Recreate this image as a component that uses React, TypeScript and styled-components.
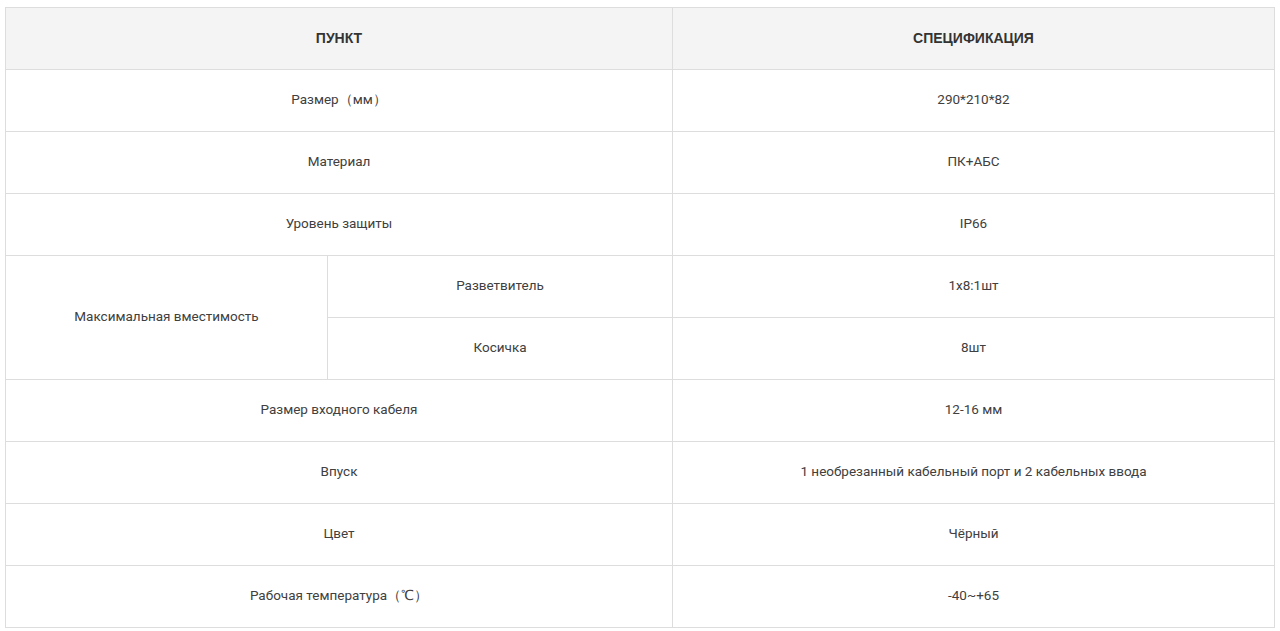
import styled, { createGlobalStyle } from 'styled-components'

const GlobalStyle = createGlobalStyle`
  body {
    margin: 0;
    padding: 7px 6px 0 5px;
    background: #fff;
    font-family: Roboto, 'Liberation Sans', Arial, sans-serif;
  }
`

const SpecTable = styled.table`
  width: 1269px;
  border-collapse: collapse;
  table-layout: fixed;
  color: #404040;
  font-size: 13.5px;
`

const HeadCell = styled.th`
  height: 59px;
  padding: 0 10px 2px;
  background-color: #f4f4f4;
  border: 1px solid #dddddd;
  font-family: 'Liberation Sans', Arial, sans-serif;
  font-size: 14px;
  font-weight: bold;
  text-transform: uppercase;
  color: #333;
  text-align: center;
`

const Cell = styled.td`
  height: 58px;
  padding: 0 10px 3px;
  border: 1px solid #dddddd;
  text-align: center;
  vertical-align: middle;
  line-height: 20px;
`

type Row = { item: string; sub?: string; value: string; span?: number; skip?: boolean }

const rows: Row[] = [
  { item: 'Размер（мм）', value: '290*210*82' },
  { item: 'Материал', value: 'ПК+АБС' },
  { item: 'Уровень защиты', value: 'IP66' },
  { item: 'Максимальная вместимость', sub: 'Разветвитель', value: '1x8:1шт', span: 2 },
  { item: '', sub: 'Косичка', value: '8шт', skip: true },
  { item: 'Размер входного кабеля', value: '12-16 мм' },
  { item: 'Впуск', value: '1 необрезанный кабельный порт и 2 кабельных ввода' },
  { item: 'Цвет', value: 'Чёрный' },
  { item: 'Рабочая температура（℃）', value: '-40~+65' },
]

function App() {
  return (
    <>
      <GlobalStyle />
      <SpecTable>
        <colgroup>
          <col style={{ width: 322 }} />
          <col style={{ width: 345 }} />
          <col style={{ width: 602 }} />
        </colgroup>
        <thead>
          <tr>
            <HeadCell colSpan={2}>Пункт</HeadCell>
            <HeadCell>Спецификация</HeadCell>
          </tr>
        </thead>
        <tbody>
          {rows.map((r, i) => (
            <tr key={i}>
              {!r.skip && (
                <Cell colSpan={r.sub ? 1 : 2} rowSpan={r.span ?? 1}>
                  {r.item}
                </Cell>
              )}
              {r.sub && <Cell>{r.sub}</Cell>}
              <Cell>{r.value}</Cell>
            </tr>
          ))}
        </tbody>
      </SpecTable>
    </>
  )
}

export default App
